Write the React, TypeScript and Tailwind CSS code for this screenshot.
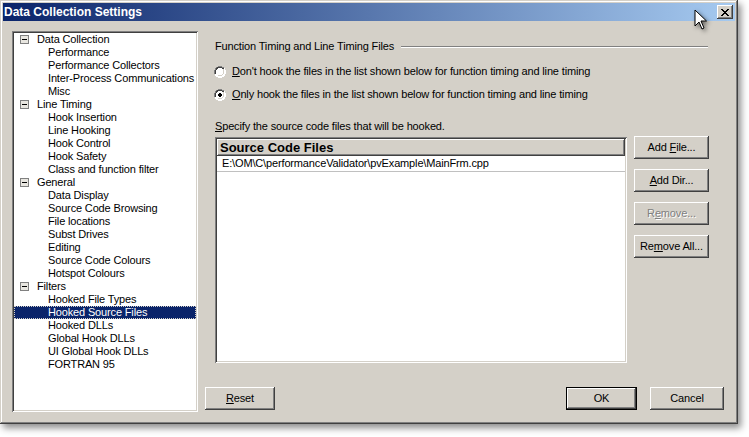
import React from "react";

const font = "font-['Liberation_Sans',Arial,sans-serif]";

const treeItems: { label: string; top?: boolean; selected?: boolean }[] = [
  { label: "Data Collection", top: true },
  { label: "Performance" },
  { label: "Performance Collectors" },
  { label: "Inter-Process Communications" },
  { label: "Misc" },
  { label: "Line Timing", top: true },
  { label: "Hook Insertion" },
  { label: "Line Hooking" },
  { label: "Hook Control" },
  { label: "Hook Safety" },
  { label: "Class and function filter" },
  { label: "General", top: true },
  { label: "Data Display" },
  { label: "Source Code Browsing" },
  { label: "File locations" },
  { label: "Subst Drives" },
  { label: "Editing" },
  { label: "Source Code Colours" },
  { label: "Hotspot Colours" },
  { label: "Filters", top: true },
  { label: "Hooked File Types" },
  { label: "Hooked Source Files", selected: true },
  { label: "Hooked DLLs" },
  { label: "Global Hook DLLs" },
  { label: "UI Global Hook DLLs" },
  { label: "FORTRAN 95" },
];

function Btn({
  children,
  disabled,
  isDefault,
  className = "",
}: {
  children: React.ReactNode;
  disabled?: boolean;
  isDefault?: boolean;
  className?: string;
}) {
  const bevel =
    "shadow-[inset_-1px_-1px_#404040,inset_1px_1px_#ffffff,inset_-2px_-2px_#808080,inset_2px_2px_#d4d0c8]";
  if (isDefault) {
    return (
      <div className={`border border-black bg-[#d4d0c8] ${className}`}>
        <div
          className={`w-full h-full flex items-center justify-center text-[11px] text-black ${bevel}`}
        >
          <span className="whitespace-pre">{children}</span>
        </div>
      </div>
    );
  }
  return (
    <div
      className={`bg-[#d4d0c8] flex items-center justify-center text-[11px] ${bevel} ${
        disabled ? "text-[#808080] [text-shadow:1px_1px_0_#ffffff]" : "text-black"
      } ${className}`}
    >
      <span className="whitespace-pre">{children}</span>
    </div>
  );
}

function Radio({ checked }: { checked?: boolean }) {
  return (
    <svg width="12" height="12" viewBox="0 0 12 12" className="shrink-0">
      <path d="M4 0h4v1h2v1h1v2h1v4h-1v2h-1v1h-2v1h-4v-1h-2v-1h-1v-2h-1v-4h1v-2h1v-1h2z" fill="#ffffff" />
      <path d="M4 0h4v1h2v1h-2v-1h-4v1h-2v2h-1v4h-1v-4h1v-2h1v-1h2z" fill="#808080" />
      <path d="M4 1h4v1h2v1h-2v-1h-4v1h-1v1h-1v4h-1v-4h1v-2h1v-1h2z" fill="#404040" />
      <path d="M10 2h1v2h1v4h-1v2h-1v1h-2v1h-4v-1h-2v-1h2v1h4v-1h2v-2h1v-4h-1z" fill="#ffffff" />
      <path d="M9 3h1v1h0v4h-1v1h-1v1h-4v-1h4v-1h1v-4z" fill="#d4d0c8" />
      {checked && <path d="M5 4h2v1h1v2h-1v1h-2v-1h-1v-2h1z" fill="#000000" />}
    </svg>
  );
}

function Minus() {
  return (
    <div className="w-[9px] h-[9px] border border-[#808080] bg-[#e8e6e0] relative shrink-0">
      <div className="absolute left-[1px] top-[3px] w-[5px] h-[1px] bg-black" />
    </div>
  );
}

export default function App() {
  return (
    <div className={`w-[749px] h-[437px] bg-white relative overflow-hidden ${font}`}>
      <div className="w-[738px] h-[424px] bg-[#d4d0c8] p-[3px] flex flex-col shadow-[inset_-1px_-1px_#404040,inset_1px_1px_#d4d0c8,inset_-2px_-2px_#808080,inset_2px_2px_#ffffff,3px_4px_7px_rgba(0,0,0,0.45)]">
        {/* Title bar */}
        <div className="h-[18px] flex items-center justify-between bg-[linear-gradient(to_right,#0a246a,#a6caf0)] pl-[1px] pr-[2px]">
          <span className="text-white font-bold text-[12px] leading-none">
            Data Collection Settings
          </span>
          <div className="w-[16px] h-[14px] bg-[#d4d0c8] flex items-center justify-center shadow-[inset_-1px_-1px_#404040,inset_1px_1px_#ffffff,inset_-2px_-2px_#808080]">
            <svg width="8" height="7" viewBox="0 0 8 7">
              <path d="M0 0h2v1h1v1h2v-1h1v-1h2v1h-1v1h-1v1h-1v1h1v1h1v1h1v1h-2v-1h-1v-1h-2v1h-1v1h-2v-1h1v-1h1v-1h1v-1h-1v-1h-1v-1h-1z" fill="#000" />
            </svg>
          </div>
        </div>

        {/* Body */}
        <div className="flex flex-1 tracking-[-0.15px]">
          {/* Tree */}
          <div className="ml-[9px] mt-[10px] w-[186px] h-[381px] bg-white p-[2px] shadow-[inset_1px_1px_#808080,inset_-1px_-1px_#ffffff,inset_2px_2px_#404040,inset_-2px_-2px_#d4d0c8]">
            {treeItems.map((it) => (
              <div key={it.label} className="h-[13px] flex items-center text-[11px] leading-[13px] text-black whitespace-nowrap">
                {it.top ? (
                  <>
                    <div className="w-[6px]" />
                    <Minus />
                    <span className="ml-[8px]">{it.label}</span>
                  </>
                ) : it.selected ? (
                  <div className="w-full h-[13px] bg-[#0a246a] text-white outline-1 outline-dotted outline-[#d4d0c8] -outline-offset-1 pl-[34px]">
                    {it.label}
                  </div>
                ) : (
                  <span className="pl-[34px]">{it.label}</span>
                )}
              </div>
            ))}
          </div>

          {/* Right pane */}
          <div className="ml-[7px] w-[519px] flex flex-col text-[11px] text-black">
            <div className="mt-[19px] h-[13px] flex items-center pl-[10px] pr-[16px]">
              <span className="leading-[13px] whitespace-nowrap">Function Timing and Line Timing Files</span>
              <div className="flex-1 ml-[7px] mt-[1px] h-[2px] border-t border-t-[#808080] border-b border-b-white" />
            </div>
            <div className="mt-[12px] h-[13px] flex items-center pl-[9px]">
              <Radio />
              <span className="ml-[6px] leading-[13px] whitespace-nowrap">
                <u>D</u>on't hook the files in the list shown below for function timing and line timing
              </span>
            </div>
            <div className="mt-[10px] h-[13px] flex items-center pl-[9px]">
              <Radio checked />
              <span className="ml-[6px] leading-[13px] whitespace-nowrap">
                <u>O</u>nly hook the files in the list shown below for function timing and line timing
              </span>
            </div>
            <div className="mt-[19px] h-[13px] pl-[10px] leading-[13px] whitespace-nowrap">
              <u>S</u>pecify the source code files that will be hooked.
            </div>

            <div className="mt-[4px] flex pl-[10px]">
              <div className="w-[412px] h-[226px] bg-white p-[2px] shadow-[inset_1px_1px_#808080,inset_-1px_-1px_#ffffff,inset_2px_2px_#404040,inset_-2px_-2px_#d4d0c8]">
                <div className="h-[17px] bg-[#d4d0c8] flex items-center pl-[3px] font-bold text-[13px] tracking-normal shadow-[inset_-1px_-1px_#404040,inset_1px_1px_#ffffff,inset_-2px_-2px_#808080]">
                  Source Code Files
                </div>
                <div className="h-[16px] flex items-center pl-[5px] border-b border-[#c0c0c0] text-[11px]">
                  E:\OM\C\performanceValidator\pvExample\MainFrm.cpp
                </div>
              </div>
              <div className="ml-[7px] -mt-[1px] flex flex-col gap-[10px]">
                <Btn className="w-[75px] h-[23px]">
                  Add <u>F</u>ile...
                </Btn>
                <Btn className="w-[75px] h-[23px]">
                  <u>A</u>dd Dir...
                </Btn>
                <Btn className="w-[75px] h-[23px]" disabled>
                  R<u>e</u>move...
                </Btn>
                <Btn className="w-[75px] h-[23px]">
                  Re<u>m</u>ove All...
                </Btn>
              </div>
            </div>

            <div className="mt-auto mb-[11px] flex items-center">
              <Btn className="w-[70px] h-[23px]">
                <u>R</u>eset
              </Btn>
              <div className="flex-1" />
              <Btn isDefault className="w-[71px] h-[23px]">
                OK
              </Btn>
              <Btn className="ml-[13px] w-[74px] h-[23px]">Cancel</Btn>
            </div>
          </div>
        </div>
      </div>

      {/* Mouse cursor */}
      <svg
        className="absolute left-[694px] top-[9px] drop-shadow-[2px_2px_2px_rgba(0,0,0,0.5)]"
        width="16"
        height="22"
        viewBox="0 0 16 22"
      >
        <path d="M1 1 L1 17 L5 13 L8 20 L10 19 L7 12 L12.5 12 Z" fill="#ffffff" stroke="#000000" strokeWidth="1" strokeLinejoin="miter" />
      </svg>
    </div>
  );
}
